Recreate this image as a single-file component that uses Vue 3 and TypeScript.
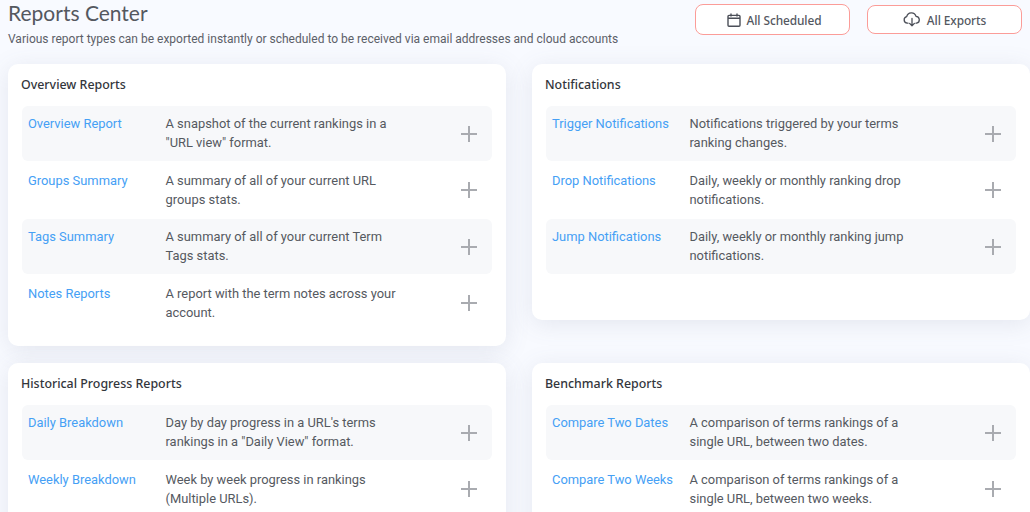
<script setup lang="ts">
interface Report {
  name: string
  desc: string
}
interface Panel {
  title: string
  reports: Report[]
}

const panels: Panel[] = [
  {
    title: 'Overview Reports',
    reports: [
      { name: 'Overview Report', desc: 'A snapshot of the current rankings in a "URL view" format.' },
      { name: 'Groups Summary', desc: 'A summary of all of your current URL groups stats.' },
      { name: 'Tags Summary', desc: 'A summary of all of your current Term Tags stats.' },
      { name: 'Notes Reports', desc: 'A report with the term notes across your account.' },
    ],
  },
  {
    title: 'Notifications',
    reports: [
      { name: 'Trigger Notifications', desc: 'Notifications triggered by your terms ranking changes.' },
      { name: 'Drop Notifications', desc: 'Daily, weekly or monthly ranking drop notifications.' },
      { name: 'Jump Notifications', desc: 'Daily, weekly or monthly ranking jump notifications.' },
    ],
  },
  {
    title: 'Historical Progress Reports',
    reports: [
      { name: 'Daily Breakdown', desc: 'Day by day progress in a URL\'s terms rankings in a "Daily View" format.' },
      { name: 'Weekly Breakdown', desc: 'Week by week progress in rankings (Multiple URLs).' },
    ],
  },
  {
    title: 'Benchmark Reports',
    reports: [
      { name: 'Compare Two Dates', desc: 'A comparison of terms rankings of a single URL, between two dates.' },
      { name: 'Compare Two Weeks', desc: 'A comparison of terms rankings of a single URL, between two weeks.' },
    ],
  },
]
</script>

<template>
  <div class="page">
    <header class="head">
      <div>
        <h1>Reports Center</h1>
        <p>Various report types can be exported instantly or scheduled to be received via email addresses and cloud accounts</p>
      </div>
      <div class="actions">
        <button class="btn">
          <svg width="14" height="14" viewBox="0 0 14 14" fill="none" stroke="#4b4f58" stroke-width="1.4">
            <rect x="1" y="2.4" width="12" height="10.8" rx="1" />
            <path d="M1 5.2h12M4 .4v3.2M10 .4v3.2" />
          </svg>
          All Scheduled
        </button>
        <button class="btn btn-low">
          <svg width="18" height="15" viewBox="0 0 18 15" fill="none" stroke="#4b4f58" stroke-width="1.3" stroke-linecap="round" stroke-linejoin="round">
            <path d="M5 11.2H4.2a3.3 3.3 0 0 1-.5-6.5A4.8 4.8 0 0 1 13 4.3a3.5 3.5 0 0 1 .6 6.9H13" />
            <path d="M9 6.4v7.4M6.6 11.4 9 13.8l2.4-2.4" />
          </svg>
          All Exports
        </button>
      </div>
    </header>

    <main class="grid">
      <section v-for="panel in panels" :key="panel.title" class="card">
        <h2>{{ panel.title }}</h2>
        <div class="rows">
          <div v-for="r in panel.reports" :key="r.name" class="row">
            <a class="name">{{ r.name }}</a>
            <span class="desc">{{ r.desc }}</span>
            <svg class="plus" width="16" height="16" viewBox="0 0 16 16" stroke="#a9abb0" stroke-width="2">
              <path d="M8 0v16M0 8h16" />
            </svg>
          </div>
        </div>
      </section>
    </main>
  </div>
</template>

<style>
html,
body {
  margin: 0;
  background: #f8faff;
  overflow: hidden;
}
</style>

<style scoped>
.page {
  height: 512px;
  overflow: hidden;
  font-family: Roboto, sans-serif;
  color: #4b4f58;
}

.head {
  display: flex;
  justify-content: space-between;
  height: 64px;
  padding-left: 8px;
}

h1 {
  margin: 0;
  font-family: Lato, sans-serif;
  font-size: 21px;
  font-weight: 400;
  line-height: 25px;
  color: #54585f;
}

.head p {
  margin: 6px 0 0;
  font-size: 12px;
  line-height: 16px;
  color: #5c6068;
}

.actions {
  display: flex;
  gap: 17px;
  align-items: flex-start;
  padding-top: 4px;
  margin-right: 8px;
}

.btn {
  display: flex;
  align-items: center;
  justify-content: center;
  gap: 6px;
  width: 155px;
  height: 31px;
  padding: 0 0 0 3px;
  border: 1px solid #fb9c98;
  border-radius: 8px;
  background: #fff;
  font-family: "Noto Sans", sans-serif;
  font-size: 11.9px;
  font-weight: 500;
  letter-spacing: -0.1px;
  color: #54585f;
}

.btn-low {
  height: 29px;
  margin-top: 1px;
  padding: 0;
}

.grid {
  display: grid;
  grid-template-columns: 498px 498px;
  grid-template-rows: 282px auto;
  column-gap: 26px;
  row-gap: 17px;
  padding-left: 8px;
  align-items: start;
}

.card {
  box-sizing: border-box;
  min-height: 256px;
  padding: 11px 14px 14px;
  background: #fff;
  border-radius: 10px;
  box-shadow: 0 4px 24px rgba(90, 100, 130, 0.13);
}

h2 {
  margin: 0 0 12px -1px;
  font-family: "Noto Sans", sans-serif;
  font-size: 12.4px;
  font-weight: 500;
  line-height: 19px;
  color: #33363c;
}

.row {
  display: flex;
  box-sizing: border-box;
  height: 55px;
  margin-bottom: 1.5px;
  padding: 8px 6px 0;
  border-radius: 6px;
  position: relative;
}

.row:nth-child(odd) {
  background: #f7f8fa;
}

.name {
  flex: 0 0 137.5px;
  font-size: 12.9px;
  line-height: 19px;
  color: #45a0f5;
}

.desc {
  width: 232px;
  font-size: 12.9px;
  line-height: 19px;
  color: #55595f;
}

.plus {
  position: absolute;
  right: 15px;
  top: 19.5px;
}
</style>
